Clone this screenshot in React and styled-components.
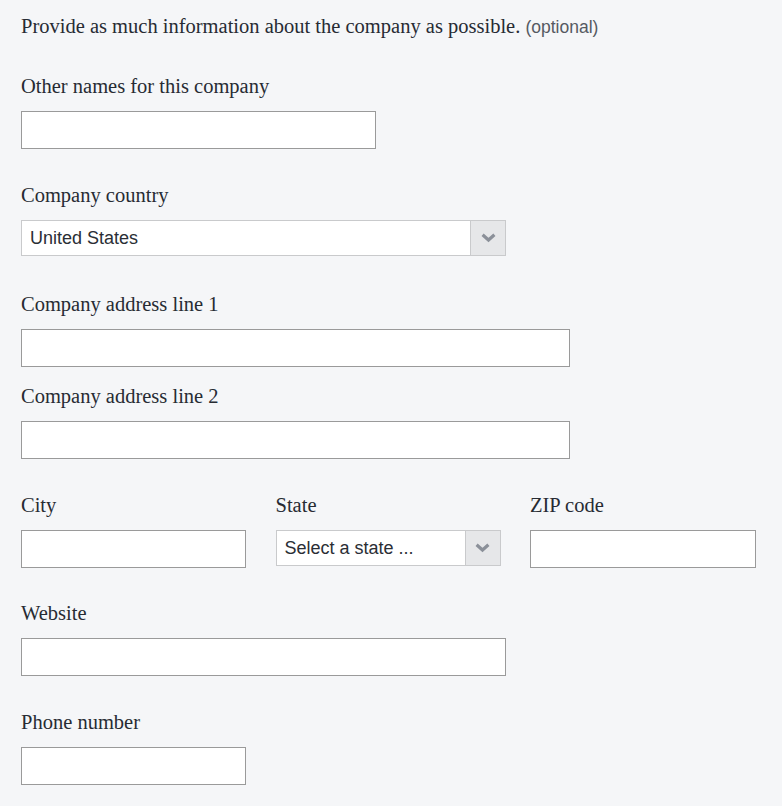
import React from "react"
import styled, { createGlobalStyle } from "styled-components"

const GlobalStyle = createGlobalStyle`
  html, body {
    margin: 0;
    padding: 0;
    background: #f5f6f8;
  }
  body {
    font-family: "Liberation Serif", "Times New Roman", serif;
    color: #272b33;
  }
`

const Page = styled.div`
  padding: 12px 21px 20px;
  min-height: 806px;
  box-sizing: border-box;
`

const Intro = styled.p`
  margin: 0 0 33px;
  font-size: 20.5px;
  line-height: 28px;
`

const Optional = styled.span`
  font-family: "Liberation Sans", Arial, sans-serif;
  font-size: 17.5px;
  color: #555a62;
`

const Field = styled.div`
  display: flex;
  flex-direction: column;
  margin-bottom: ${(p) => (p.$tight ? "17px" : "34px")};
`

const Label = styled.label`
  font-size: 20.5px;
  line-height: 24px;
  margin-bottom: 13px;
`

const Input = styled.input`
  box-sizing: border-box;
  width: ${(p) => p.$width}px;
  height: 38px;
  margin: 0;
  border: 1px solid #9a9a9a;
  background: #fff;
  font-size: 18px;
  padding: 0 8px;
  outline: none;
`

const SelectBox = styled.div`
  box-sizing: border-box;
  display: flex;
  width: ${(p) => p.$width}px;
  height: 36px;
  margin-bottom: 2px;
  border: 1px solid #c9cacc;
  background: #fff;
`

const SelectValue = styled.div`
  flex: 1;
  display: flex;
  align-items: center;
  padding-left: 8px;
  font-family: "Liberation Sans", Arial, sans-serif;
  font-size: 18px;
  color: #2a2e35;
`

const SelectButton = styled.div`
  width: 34px;
  display: flex;
  align-items: center;
  justify-content: center;
  background: #e6e7e9;
  border-left: 1px solid #c9cacc;
`

const Row = styled.div`
  display: grid;
  grid-template-columns: 225px 225px 226px;
  column-gap: 29.5px;
  margin-bottom: 33px;

  ${Field} {
    margin-bottom: 0;
  }
`

const Chevron = () => (
  <svg width="15" height="10" viewBox="0 0 15 10">
    <path d="M1.6 1.8 L7.5 7 L13.4 1.8" fill="none" stroke="#8b9099" strokeWidth="3.2" />
  </svg>
)

const Select = ({ width, value }) => (
  <SelectBox $width={width}>
    <SelectValue>{value}</SelectValue>
    <SelectButton>
      <Chevron />
    </SelectButton>
  </SelectBox>
)

export default function App() {
  return (
    <Page>
      <GlobalStyle />
      <Intro>
        Provide as much information about the company as possible. <Optional>(optional)</Optional>
      </Intro>

      <Field>
        <Label>Other names for this company</Label>
        <Input $width={355} />
      </Field>

      <Field>
        <Label>Company country</Label>
        <Select width={485} value="United States" />
      </Field>

      <Field $tight>
        <Label>Company address line 1</Label>
        <Input $width={549} />
      </Field>

      <Field>
        <Label>Company address line 2</Label>
        <Input $width={549} />
      </Field>

      <Row>
        <Field>
          <Label>City</Label>
          <Input $width={225} />
        </Field>
        <Field>
          <Label>State</Label>
          <Select width={225} value="Select a state ..." />
        </Field>
        <Field>
          <Label>ZIP code</Label>
          <Input $width={226} />
        </Field>
      </Row>

      <Field>
        <Label>Website</Label>
        <Input $width={485} />
      </Field>

      <Field>
        <Label>Phone number</Label>
        <Input $width={225} />
      </Field>
    </Page>
  )
}
